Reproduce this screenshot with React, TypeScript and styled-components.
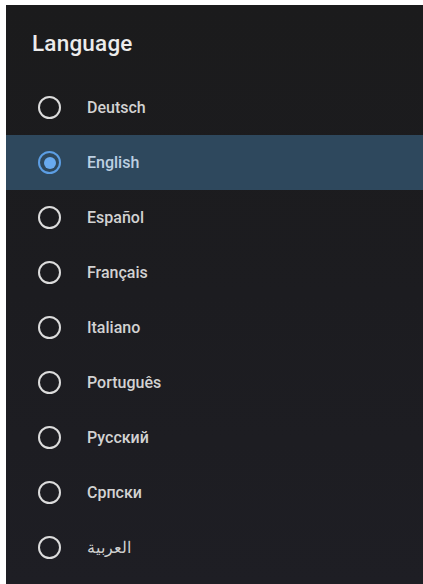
import { useState } from 'react';
import styled, { createGlobalStyle } from 'styled-components';

const GlobalStyle = createGlobalStyle`
  html, body {
    margin: 0;
    padding: 0;
    background-color: #ffffff;
  }

  body {
    font-family: Roboto, 'Noto Sans', 'Liberation Sans', sans-serif;
  }
`;

const Panel = styled.div`
  margin: 5px 0 0 6px;
  width: 417px;
  height: 579px;
  overflow: hidden;
  background: linear-gradient(180deg, #1b1b1c 0%, #1c1c20 50%, #1e1e24 100%);
`;

const Title = styled.h1`
  margin: 0;
  padding: 24px 0 0 26px;
  height: 51px;
  font-size: 22.5px;
  line-height: 28px;
  font-weight: 500;
  color: #ececec;
  letter-spacing: 0.2px;
`;

const List = styled.ul`
  list-style: none;
  margin: 0;
  padding: 0;
`;

const Row = styled.li<{ selected: boolean }>`
  display: flex;
  align-items: center;
  gap: 26px;
  height: 55px;
  padding-left: 32px;
  background-color: ${({ selected }) => (selected ? '#2e485d' : 'transparent')};
  cursor: pointer;
`;

const Radio = styled.span<{ selected: boolean }>`
  box-sizing: border-box;
  display: flex;
  align-items: center;
  justify-content: center;
  width: 23px;
  height: 23px;
  border-radius: 50%;
  border: 2.5px solid ${({ selected }) => (selected ? '#5c9ee4' : '#dcdcdc')};
  flex-shrink: 0;
`;

const Dot = styled.span`
  width: 12px;
  height: 12px;
  border-radius: 50%;
  background-color: #68aaf0;
`;

const Label = styled.span<{ selected: boolean }>`
  font-size: 16px;
  font-weight: 500;
  color: ${({ selected }) => (selected ? '#bdd0e2' : '#d2d2d2')};
`;

const languages = [
  'Deutsch',
  'English',
  'Español',
  'Français',
  'Italiano',
  'Português',
  'Русский',
  'Српски',
  'العربية',
];

const App: React.FC = () => {
  const [current, setCurrent] = useState('English');

  return (
    <>
      <GlobalStyle />
      <Panel>
        <Title>Language</Title>
        <List>
          {languages.map((lang) => {
            const selected = lang === current;
            return (
              <Row key={lang} selected={selected} onClick={() => setCurrent(lang)}>
                <Radio selected={selected}>{selected && <Dot />}</Radio>
                <Label selected={selected}>{lang}</Label>
              </Row>
            );
          })}
        </List>
      </Panel>
    </>
  );
};

export default App;
